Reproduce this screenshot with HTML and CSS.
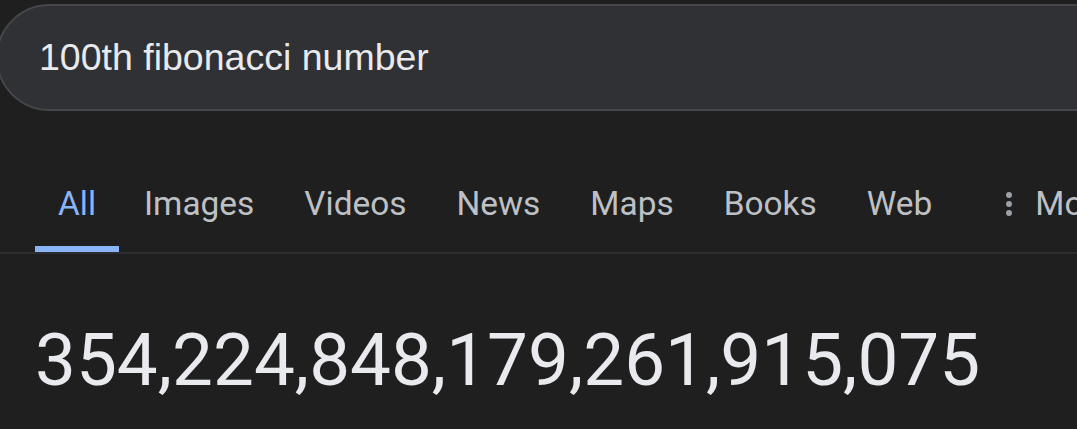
FILE: index.html
```html
<!DOCTYPE html>
<html lang="en">
<head>
<meta charset="utf-8">
<title>100th fibonacci number</title>
<link rel="stylesheet" href="styles.css">
</head>
<body>
<div class="search-box">
  <span class="query">100th fibonacci number</span>
</div>
<nav class="tabs">
  <a class="tab active">All</a>
  <a class="tab">Images</a>
  <a class="tab">Videos</a>
  <a class="tab">News</a>
  <a class="tab">Maps</a>
  <a class="tab">Books</a>
  <a class="tab">Web</a>
  <a class="tab more">
    <svg class="dots" width="10" height="30" viewBox="0 0 10 30"><circle cx="5" cy="6" r="3"/><circle cx="5" cy="15" r="3"/><circle cx="5" cy="24" r="3"/></svg>
    <span>More</span>
  </a>
</nav>
<div class="answer">354,224,848,179,261,915,075</div>
</body>
</html>
```

FILE: styles.css
```css
html, body {
  margin: 0;
  padding: 0;
  background: #1f1f1f;
  overflow: hidden;
}
body {
  width: 1077px;
  height: 429px;
  font-family: Roboto, "Liberation Sans", sans-serif;
}
.search-box {
  box-sizing: border-box;
  margin-top: 4px;
  margin-left: -4px;
  width: 1300px;
  height: 107px;
  border: 2px solid #45474a;
  border-radius: 54px;
  background: #303134;
  display: flex;
  align-items: center;
  padding-left: 41px;
}
.query {
  font-family: "Liberation Sans", Arial, sans-serif;
  font-size: 37.5px;
  color: #e8eaed;
  line-height: 1;
  padding-top: 1px;
}
.tabs {
  display: flex;
  margin-top: 73px;
  padding-left: 35px;
  border-bottom: 2px solid #2c2d30;
  white-space: nowrap;
}
.tab {
  display: flex;
  align-items: center;
  padding: 0 25px 22px;
  height: 40px;
  line-height: 40px;
  font-size: 33.4px;
  color: #bdc1c6;
  border-bottom: 6px solid transparent;
  flex: none;
}
.tab.active {
  color: #8ab4f8;
  border-bottom-color: #8ab4f8;
  padding-left: 23px;
  padding-right: 23px;
}
.tab.more {
  padding-left: 47px;
  gap: 21px;
}
.dots {
  fill: #9aa0a6;
  display: block;
}
.answer {
  margin-top: 62px;
  padding-left: 35px;
  font-size: 72.8px;
  line-height: 88px;
  color: #e8eaed;
  white-space: nowrap;
}
```
